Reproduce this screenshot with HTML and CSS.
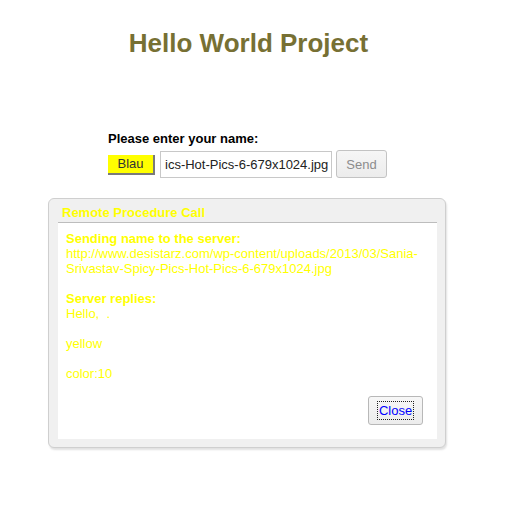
FILE: index.html
```html
<!DOCTYPE html>
<html>
<head>
<meta charset="utf-8">
<link rel="stylesheet" href="styles.css">
</head>
<body>
<div class="page">
  <h1 class="title">Hello World Project</h1>
  <div class="form">
    <div class="label">Please enter your name:</div>
    <div class="row">
      <button class="blau">Blau</button>
      <div class="field">ics-Hot-Pics-6-679x1024.jpg</div>
      <button class="send">Send</button>
    </div>
  </div>
  <div class="dialog">
    <div class="caption">Remote Procedure Call</div>
    <div class="content">
      <div class="text"><b>Sending name to the server:</b><br>http://www.desistarz.com/wp-content/uploads/2013/03/Sania-Srivastav-Spicy-Pics-Hot-Pics-6-679x1024.jpg<br><br><b>Server replies:</b><br>Hello, &nbsp;.<br><br>yellow<br><br>color:10</div>
      <div class="actions"><button class="close"><span>Close</span></button></div>
    </div>
  </div>
</div>
</body>
</html>
```

FILE: styles.css
```css
html, body {
  margin: 0;
  padding: 0;
  background: #ffffff;
}
body {
  padding: 8px;
  font-family: "Liberation Sans", Arial, sans-serif;
  font-size: 13px;
}
.page {
  width: 481px;
}
.title {
  margin: 20px 0 0 0;
  font-size: 26px;
  font-weight: bold;
  line-height: 30px;
  text-align: center;
  color: #777033;
}
.form {
  margin: 73px 0 0 100px;
}
.label {
  font-weight: bold;
  line-height: 15px;
  color: #000;
}
.row {
  display: flex;
  align-items: center;
  margin-top: 4px;
  height: 28px;
}
.blau {
  width: 47px;
  height: 20px;
  margin: 1px 0 0 0;
  padding: 0 0 1px 0;
  background: #ffff00;
  border: none;
  border-right: 2px solid #7a7a7a;
  border-bottom: 2px solid #7a7a7a;
  font-family: "Liberation Sans", Arial, sans-serif;
  font-size: 13px;
  color: #333;
}
.field {
  box-sizing: border-box;
  width: 172px;
  height: 27px;
  margin: 1px 0 0 5px;
  border: 1px solid #c8c8c8;
  display: flex;
  align-items: center;
  white-space: nowrap;
  padding: 0 2px 0 4px;
  color: #222;
}
.send {
  box-sizing: border-box;
  width: 51px;
  height: 28px;
  margin: 0 0 0 4px;
  padding: 0;
  border: 1px solid #c3c3c3;
  border-radius: 3px;
  background: linear-gradient(#f6f6f6, #ececec);
  font-family: "Liberation Sans", Arial, sans-serif;
  font-size: 13px;
  color: #8c8c8c;
}
.dialog {
  box-sizing: border-box;
  width: 398px;
  margin: 20px 0 0 40px;
  border: 1px solid #cfcfcf;
  border-radius: 6px;
  background: #f0f0f0;
  padding: 0 9px 8px 9px;
  box-shadow: 1px 2px 2px rgba(0, 0, 0, 0.12);
}
.caption {
  padding: 6px 4px 2px 4px;
  line-height: 15px;
  font-weight: bold;
  color: #ffff00;
}
.content {
  background: #ffffff;
  border-top: 1px solid #bdbdbd;
  padding: 8px;
  margin-right: -1px;
}
.text {
  line-height: 15px;
  color: #ffff00;
}
.actions {
  display: flex;
  justify-content: flex-end;
  margin: 15px 6px 6px 0;
}
.close {
  box-sizing: border-box;
  width: 55px;
  height: 29px;
  margin: 0;
  padding: 0;
  border: 1px solid #b8b8b8;
  border-radius: 3px;
  background: linear-gradient(#f7f7f7, #ececec);
  font-family: "Liberation Sans", Arial, sans-serif;
  font-size: 13px;
  color: #0000ff;
}
.close span {
  outline: 1px dotted #222;
  padding: 1px 1px;
}
```
